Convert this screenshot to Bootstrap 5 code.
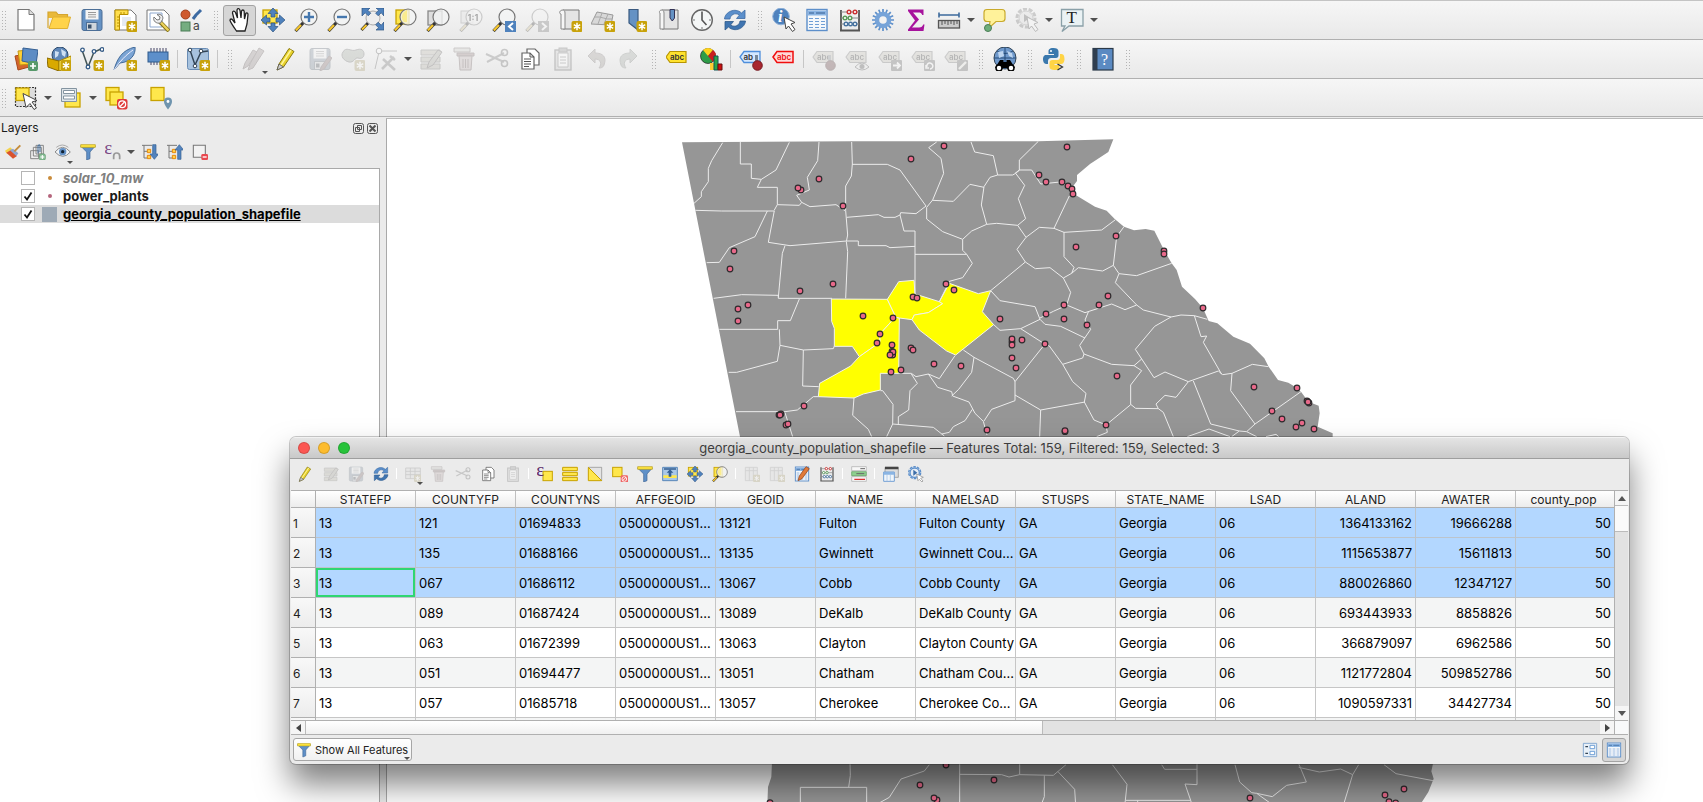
<!DOCTYPE html>
<html lang="en">
<head>
<meta charset="utf-8">
<meta name="viewport" content="width=device-width, initial-scale=1">
<title>Georgia county population</title>
<link href="https://cdn.jsdelivr.net/npm/bootstrap@5.3.0/dist/css/bootstrap.min.css" rel="stylesheet">
<style>
:root{--ui:#ebebeb;--line:#b0b0b0}
body{font-family:Inter,"Liberation Sans",sans-serif;font-size:13px;line-height:18px;color:#1a1a1a;background:var(--ui)}
svg{overflow:visible;display:block;flex:none}
.bar{background:linear-gradient(#f6f6f6,#e9e9e9);border-bottom:1px solid var(--line);height:39px}
.bar-first{border-top:1px solid #c4c4c4;height:40px}
.bar-last{height:38px}
.grip{width:16px;height:20px;flex:none;background:radial-gradient(circle,#b4b4b4 1px,transparent 1px) 0 0/3px 3px repeat content-box content-box;padding:0 5px 0 6px}
.grip-start{width:9px;padding:0 3px 0 1px}
.tool{border:1px solid transparent;background:none;padding:0;width:33px;height:31px;display:flex;align-items:center;justify-content:center;flex:none;border-radius:3px;position:relative}
.tool svg{width:24px;height:24px}
.tool.on{background:#d6d6d6;border-color:#a3a3a3}
.tool:disabled svg{opacity:.3;filter:grayscale(.7)}
.drop{border:0;background:none;padding:0;width:12px;height:24px;flex:none;display:flex;align-items:center;justify-content:center}
.drop::before,.corner::after{content:"";border:4px solid transparent;border-top:4px solid #505050;border-bottom:0}
.corner::after{position:absolute;right:1px;bottom:0;border-width:3px;border-top-width:3px}
.rule{width:1px;height:18px;margin:0 3px;background:#c6c6c6;flex:none}
.small-tools .tool{width:25px;height:25px}
.small-tools .tool svg{width:16px;height:16px}
.small-tools .rule{height:11px;background:#fff}
.side{width:386px;flex:none}
.side-title{height:21px;font-size:12px;padding:1px 8px 0 1px}
.side-tools{height:30px;padding-bottom:2px}
.mini{border:0;padding:0;background:none;width:11px;height:11px}
.tree{background:#fff;border-top:1px solid #a9a9a9;border-right:1px solid #a9a9a9;margin-right:6px}
.layer{height:18px;padding-left:21px;font-weight:700;font-size:13px}
.layer input{appearance:none;width:14px;height:14px;border:1px solid #b5b5b5;background:#fff;margin:0;flex:none}
.layer input:checked{background:#fff url("data:image/svg+xml,%3Csvg xmlns='http://www.w3.org/2000/svg' viewBox='0 0 12 12'%3E%3Cpath d='M2.500 6.500L5 9.500L9.500 2.500' fill='none' stroke='%23111' stroke-width='1.800'/%3E%3C/svg%3E")}
.sym{width:15px;height:15px;margin:0 6px 0 7px;display:flex;align-items:center;justify-content:center;flex:none}
.sym i{width:4px;height:4px;border-radius:50%}
.canvas{background:#fff;border-left:1px solid #a9a9a9;border-top:1px solid #b8b8b8;margin-top:1px;overflow:hidden}
.canvas svg{width:100%;height:100%}
.attr{position:absolute;left:290px;right:74px;top:437px;border-radius:6px;background:var(--ui);box-shadow:0 0 0 1px rgba(0,0,0,.2),0 20px 32px rgba(0,0,0,.5);overflow:hidden}
.attr-title{height:22px;background:linear-gradient(#e4e4e4,#c9c9c9);border-bottom:1px solid #9e9e9e;border-top:1px solid #f2f2f2;color:#3d3d3d;position:relative}
.attr-title h1{font-size:13px;line-height:20px;font-weight:400;margin:0}
.lights{position:absolute;left:8px;top:4px;gap:8px}
.lights button{width:12px;height:12px;border-radius:50%;border:1px solid rgba(0,0,0,.15);padding:0}
.attr-tools{height:31px;padding:0 0 2px 3px}
.gridbox{border-top:1px solid #b0b0b0;margin-left:1px;margin-right:1px}
.gridview{height:229px;overflow:hidden;background:#fff}
.attr-table{table-layout:fixed;width:1325px;border-collapse:separate;border-spacing:0;color:#000}
.attr-table th{font-weight:400;font-size:12px;height:17px;line-height:15px;padding:1px 0 0;text-align:center;background:linear-gradient(#fff,#ececec);border-right:1px solid #c0c0c0;border-bottom:1px solid #b0b0b0;color:#222}
.attr-table th:first-child{width:25px;border-color:#b0b0b0}
.attr-table th:last-child{padding-right:4px}
.attr-table tbody th{text-align:left;padding-left:2px;background:linear-gradient(#f8f8f8,#ececec)}
.attr-table td{height:30px;line-height:28px;padding:0 3px;white-space:nowrap;overflow:hidden;border-right:1px solid #c6c6c6;border-bottom:1px solid #c6c6c6;background:#fff}
.attr-table td:last-child{padding-right:4px}
.attr-table tr:nth-child(even) td{background:#f4f5f5}
.attr-table tr.picked td{background:#b3d7ff;border-color:#bcc4cc}
.attr-table tr.picked td.current{box-shadow:inset 0 0 0 2px #2fd672}
.sbar{background:#e2e2e2}
.sbar button{border:0;padding:0;width:14px;height:14px;background:#f5f5f5;display:flex;align-items:center;justify-content:center;flex:none}
.vbar{width:14px;border-left:1px solid #b0b0b0}
.vthumb{height:27px;background:#fafafa;border-top:1px solid #bbb;border-bottom:1px solid #bbb}
.hbar{height:15px;border-top:1px solid #b0b0b0;border-bottom:1px solid #b0b0b0}
.hbar button{height:13px}
.hthumb{width:57%;height:13px;background:linear-gradient(#fff,#f0f0f0);border-left:1px solid #bbb;border-right:1px solid #bbb}
.attr-foot{height:29px;padding:0 3px}
.filter-btn{height:23px;width:119px;font-size:11px;line-height:16px;white-space:nowrap;border:1px solid #a6a6a6;border-radius:3px;background:linear-gradient(#fff,#f1f1f1);padding:0 0 0 3px;position:relative;color:#222}
.filter-btn svg{width:14px;height:16px}
.foot-tools .tool{width:24px;height:24px}
.foot-tools .tool svg{width:16px;height:16px}
</style>
</head>
<body class="vh-100 overflow-hidden d-flex flex-column position-relative">

<svg width="0" height="0" class="position-absolute" aria-hidden="true">
<defs>
<symbol id="bd" viewBox="0 0 24 24"><rect x="13.500" y="13" width="11" height="11" rx="2" fill="#c8a20a"/><path d="M19 14.800v7.400M15.800 16.600l6.400 3.800M22.200 16.600l-6.400 3.800" stroke="#fff" stroke-width="1.500"/></symbol>
<symbol id="lens" viewBox="0 0 24 24"><path d="M9.500 14.500L1.500 23" stroke="#333" stroke-width="3.200"/><path d="M7 17L1.800 22.600" stroke="#f5c52c" stroke-width="2.200"/><circle cx="15" cy="9" r="8" fill="#f2f4f4" fill-opacity=".8" stroke="#777" stroke-width="1.200"/></symbol>
<symbol id="pencil" viewBox="0 0 24 24"><path d="M2 23l2-6L14 1.500l5 3L8.500 20z" fill="#e8d22c" stroke="#8a7a10"/><path d="M6 18L16 3" stroke="#fff59a" stroke-width="1.500"/><path d="M2 23l2-6 4.500 3z" fill="#ccc" stroke="#555" stroke-width=".8"/></symbol>
<symbol id="new" viewBox="0 0 24 24"><path d="M4 1.500h11l5 5V22H4z" fill="#fff" stroke="#777" stroke-width="1.200"/><path d="M15 1.500v5h5" fill="#ddd" stroke="#777"/></symbol>
<symbol id="open" viewBox="0 0 24 24"><path d="M1 4h8l2 2h10v4H1z" fill="#e9b93a"/><path d="M1 20V4h8l2 2.500h9.500V9" fill="none" stroke="#d5a52f" stroke-width="1.200"/><path d="M2 20.500L6 9h17.500l-3 11.500z" fill="#ffd34a" stroke="#e0b030"/></symbol>
<symbol id="save" viewBox="0 0 24 24"><rect x="2" y="1.500" width="20" height="21" rx="2" fill="#6592c4" stroke="#4c6f97"/><rect x="5.500" y="2" width="13" height="9.500" fill="#f5f5f5"/><path d="M8 4.500h8M8 6.700h8M8 9h8" stroke="#999"/><rect x="6.500" y="14.500" width="10.500" height="8" fill="#cfd6dc" stroke="#4c6f97"/><rect x="8" y="16.500" width="3.500" height="4" fill="#39506b"/></symbol>
<symbol id="layout" viewBox="0 0 24 24"><path d="M2 2h16l5 5v15H2z" fill="#fff" stroke="#777"/><path d="M2 2h13v4.500H6.500V22H2z" fill="#ffdf4d" stroke="#b89000"/><path d="M4 9h2M4 12h2M4 15h2M4 18h2M8 4v2M11 4v2" stroke="#b89000"/><path d="M9 9h9v9H9z" fill="#e6ebf2"/><use href="#bd"/></symbol>
<symbol id="manager" viewBox="0 0 24 24"><path d="M1 2h17l5 5v15H1z" fill="#fff" stroke="#777"/><path d="M4 5h12v14H4z" fill="none" stroke="#8da8cf"/><path d="M14 14l9 9" stroke="#80701a" stroke-width="4"/><path d="M14.500 14l8 8.500" stroke="#ecd25b" stroke-width="2.400"/><path d="M8 9l3 3 2.500-.500L14 9l-3-2.500c4-1 7 2 5.500 5l-2 3.500c-4 1-8-2-6.500-6z" fill="#eee" stroke="#777"/></symbol>
<symbol id="style" viewBox="0 0 24 24"><circle cx="6.500" cy="6.500" r="4.500" fill="#cf5a2e" stroke="#a0401c"/><path d="M14 11l3-4 5-5" stroke="#3d6aa2" stroke-width="3"/><rect x="2" y="14" width="9" height="9" fill="#74ad80" stroke="#4b7d56"/><text x="14" y="22" font-family="Inter" font-size="12" fill="#444">a</text></symbol>
<symbol id="hand" viewBox="0 0 24 24"><path d="M8.500 23C5 18 3 15 2 12.500c0-2 2-2 3 0l2 2.500L4.500 5c0-2.500 2-2.500 3-.500l2 5.500L9 2.500C9 0 11.500 0 12 2.500l1 7.500.500-6.500c0-2 2.500-2 2.700 0L16.500 11l1.200-5c.3-1.700 2.300-1.300 2.300.500l-1 9.500-2 7z" fill="#fff" stroke="#222" stroke-width="1.300"/></symbol>
<symbol id="arrows4" viewBox="0 0 24 24"><path d="M12 0l5 5.500h-3V9h-4V5.500H7zM12 24l5-5.500h-3V15h-4v3.500H7zM0 12l5.500-5v3H9v4H5.500v3zM24 12l-5.500-5v3H15v4h3.500v3z" fill="#4f82bd" stroke="#2f5580" stroke-width=".7"/></symbol>
<symbol id="pansel" viewBox="0 0 24 24"><rect x="2" y="2" width="14" height="13" fill="#ffe74c" stroke="#c8a200" stroke-width="1.300"/><use href="#arrows4"/></symbol>
<symbol id="zin" viewBox="0 0 24 24"><use href="#lens"/><path d="M15 4v10M10 9h10" stroke="#4577ae" stroke-width="2.400"/></symbol>
<symbol id="zout" viewBox="0 0 24 24"><use href="#lens"/><path d="M10 9h10" stroke="#4577ae" stroke-width="2.400"/></symbol>
<symbol id="zfull" viewBox="0 0 24 24"><path d="M8.500 14.500L1.500 22" stroke="#333" stroke-width="3"/><path d="M6.500 17L2 21.500" stroke="#f5c52c" stroke-width="2"/><circle cx="13" cy="10" r="7" fill="#eee" stroke="#aaa"/><path d="M2 0h8L7.800 2.200l3 3-2.600 2.600-3-3L2 8zM24 0v8l-2.800-3.200-3 3-2.600-2.600 3-3L16 0zM24 22h-8l2.600-2.200-3-3 2.600-2.600 3 3L24 14z" fill="#4f82bd" stroke="#2f5580" stroke-width=".7"/></symbol>
<symbol id="zsel" viewBox="0 0 24 24"><rect x="3" y="2" width="13" height="14" fill="#ffe74c" stroke="#c8a200" stroke-width="1.300"/><use href="#lens"/><path d="M11 4a7 7 0 0 0 0 10h3V2z" fill="#ffe74c" opacity=".5"/></symbol>
<symbol id="zlay" viewBox="0 0 24 24"><rect x="2" y="3" width="14" height="14" fill="#ddd" stroke="#888" stroke-width="1.300"/><use href="#lens"/></symbol>
<symbol id="znat" viewBox="0 0 24 24"><rect x="2" y="3" width="12" height="12" fill="#ddd" stroke="#888"/><use href="#lens"/><text x="8.500" y="13" font-family="Inter" font-weight="700" font-size="9">1:1</text></symbol>
<symbol id="zlast" viewBox="0 0 24 24"><use href="#lens"/><rect x="13" y="13" width="11" height="11" fill="#4f82bd"/><path d="M21 15l-4 3.500 4 3.500" fill="none" stroke="#fff" stroke-width="2"/></symbol>
<symbol id="znext" viewBox="0 0 24 24"><use href="#lens"/><rect x="13" y="13" width="11" height="11" fill="#777"/><path d="M17 15l4 3.500-4 3.500" fill="none" stroke="#fff" stroke-width="2"/></symbol>
<symbol id="mapview" viewBox="0 0 24 24"><path d="M5 2h16v19H5z" fill="#e4e4e4" stroke="#777"/><path d="M5 2C1 2 1 6 3 6v15h4V5c0-2-1-3-2-3z" fill="#f6f6f6" stroke="#888"/><use href="#bd"/></symbol>
<symbol id="map3d" viewBox="0 0 24 24"><path d="M6 4l16 3-2 10L0 16z" fill="#d8d8d8" stroke="#999"/><path d="M4 9c7-1 10 3 17 2M11 5L7 16M17 6l-4 10" fill="none" stroke="#aaa"/><use href="#bd"/></symbol>
<symbol id="bookm" viewBox="0 0 24 24"><path d="M5 1.500h9V22L5 15z" fill="#6592c4" stroke="#3a5a80" stroke-width="1.200"/><use href="#bd" x="-1"/></symbol>
<symbol id="bookms" viewBox="0 0 24 24"><path d="M5 2h16v19H5z" fill="#e4e4e4" stroke="#777"/><path d="M5 2C2 2 2 5 3 5v16h4V5c0-2-1-3-2-3z" fill="#f6f6f6" stroke="#888"/><path d="M13 1.500h4.500V10l-2.200 3L13 10z" fill="#6592c4" stroke="#335"/></symbol>
<symbol id="clock" viewBox="0 0 24 24"><circle cx="12" cy="12" r="10.300" fill="#f4f6f6" stroke="#666" stroke-width="1.400"/><path d="M12 3.500V12l4.500 5" fill="none" stroke="#555" stroke-width="1.600"/><path d="M19 12h2M3 12h2M12 19v2" stroke="#777"/></symbol>
<symbol id="refresh" viewBox="0 0 24 24"><path d="M1.500 11C2 4 12-1 18.500 5L22 2v8.500h-8.500L16.500 7c-5-3-9 0-9.500 4z" fill="#5b8fcb" stroke="#3c6ba3" stroke-width=".8"/><path d="M22.500 13C22 20 12 25 5.500 19L2 22v-8.500h8.500L7.500 17c5 3 9 0 9.500-4z" fill="#3f74b0" stroke="#2f5a8c" stroke-width=".8"/></symbol>
<symbol id="cursor" viewBox="0 0 24 24"><path d="M12 9l11 5.500-4 1.500 4 5.500-2.500 2-4-5.500-2.500 3z" fill="#fff" stroke="#444"/></symbol>
<symbol id="info" viewBox="0 0 24 24"><circle cx="9" cy="8.500" r="8.300" fill="#4f82bd" stroke="#8eb0d8"/><text x="6" y="14" font-family="Liberation Serif" font-style="italic" font-weight="700" font-size="16" fill="#fff">i</text><use href="#cursor"/></symbol>
<symbol id="table" viewBox="0 0 24 24"><rect x="2" y="1.500" width="20" height="21" fill="#f5f8fb" stroke="#5d8fca" stroke-width="1.400"/><rect x="3" y="2.500" width="18" height="5" fill="#8ab4e3"/><path d="M4 5h5M11 5h9" stroke="#345f92"/><path d="M4 10.500h4M10 10.500h4M16 10.500h4M4 13.500h4M10 13.500h4M16 13.500h4M4 16.500h4M10 16.500h4M16 16.500h4M4 19.500h4M10 19.500h4M16 19.500h4" stroke="#6f9fd6"/></symbol>
<symbol id="abacus" viewBox="0 0 24 24"><path d="M3 22V2M21 22V2M2 22.500h20" stroke="#555" stroke-width="1.800"/><path d="M3 4h18M3 10h18M3 16h18" stroke="#888"/><g fill="#fff" stroke-width="1.400"><g stroke="#c33"><circle cx="11" cy="4" r="1.800"/><circle cx="17" cy="4" r="1.800"/></g><g stroke="#5a9a5a"><circle cx="7" cy="10" r="1.800"/><circle cx="12" cy="10" r="1.800"/></g><g stroke="#48739f"><circle cx="8" cy="16" r="1.800"/><circle cx="12.500" cy="16" r="1.800"/><circle cx="17" cy="16" r="1.800"/></g></g></symbol>
<symbol id="gear" viewBox="0 0 24 24"><path d="M12 1v22M1 12h22M4.200 4.200l15.600 15.600M19.800 4.200L4.200 19.800M7.800 1.800l8.400 20.400M16.200 1.800L7.800 22.200M1.800 7.800l20.400 8.400M1.800 16.200l20.400-8.400" stroke="#5d8fca" stroke-width="1.700"/><circle cx="12" cy="12" r="6" fill="#f2f2f2" stroke="#76a3d8" stroke-width="4.500"/></symbol>
<symbol id="sigma" viewBox="0 0 24 24"><path d="M4 1.500h15.500V7h-1.300c-.7-2-1.700-2.500-4-2.500H9l6 7-7 8h7c2.500 0 3.500-1 4.200-3h1.300L19.500 23H4v-1.500l7-9L4 3z" fill="#a6129c"/></symbol>
<symbol id="ruler" viewBox="0 0 24 24"><path d="M2 7h20M2 4.500v5M22 4.500v5" stroke="#3c6a9c" stroke-width="1.600"/><rect x="1.500" y="12.500" width="21" height="7.500" fill="#ccc" stroke="#555" stroke-width="1.300"/><path d="M5 13v4M8 13v3M11 13v4M14 13v3M17 13v4M20 13v3" stroke="#555"/></symbol>
<symbol id="tip" viewBox="0 0 24 24"><path d="M5 1.500h15q3 0 3 3v6q0 3-3 3h-6L7 20l1-6.500H5q-3 0-3-3v-6q0-3 3-3z" fill="#fff29a" stroke="#c9aa2c" stroke-width="1.200"/><circle cx="6" cy="20" r="3.500" fill="#6fae7b" stroke="#4b7d56"/></symbol>
<symbol id="action" viewBox="0 0 24 24"><circle cx="11" cy="10" r="9" fill="none" stroke="#777" stroke-width="3" stroke-dasharray="4 1.600"/><circle cx="11" cy="10" r="7" fill="#ddd" stroke="#888"/><path d="M9 6l6 4-6 4z" fill="#555"/><use href="#cursor"/></symbol>
<symbol id="tnote" viewBox="0 0 24 24"><path d="M1.500 1.500H23V18H9l-7 5.500L5 18H1.500z" fill="#eaf2f4" stroke="#8aa0a8" stroke-width="1.300"/><text x="6.500" y="15" font-family="Liberation Serif" font-size="17" fill="#222">T</text></symbol>
<symbol id="addlayers" viewBox="0 0 24 24"><path d="M1 9l10-2 4 13-11 3z" fill="#d3652c" stroke="#a8481a"/><path d="M4 4l11-1 2 14-11 1z" fill="#ffcf33" stroke="#c39812"/><path d="M9 1l15 2-2 14-14-3z" fill="#5d8cc4" stroke="#355f92"/><rect x="14" y="14" width="10" height="10" rx="2" fill="#57996a"/><path d="M19 16v6M16 19h6" stroke="#fff" stroke-width="1.700"/></symbol>
<symbol id="gpkg" viewBox="0 0 24 24"><circle cx="13" cy="8" r="8" fill="#5f87b8" stroke="#2d4a6c"/><path d="M8 4l4 1-1 4-3 2zM14 2l5 3-1 5-3-2z" fill="#cfe0f2"/><path d="M0 11l12 3v10L1 20z" fill="#d9a900" stroke="#8a6a00"/><path d="M12 14l12-5v10l-12 5z" fill="#ffea5c" stroke="#a88200"/><use href="#bd"/></symbol>
<symbol id="vec" viewBox="0 0 24 24"><path d="M2 3l6 17L14 5l7-3" fill="none" stroke="#455" stroke-width="1.500"/><g fill="#fff" stroke="#355b86" stroke-width="1.300"><circle cx="2.500" cy="3" r="1.800"/><circle cx="8" cy="20" r="1.800"/><circle cx="14" cy="4.500" r="1.800"/><circle cx="22" cy="2.500" r="1.800"/></g></symbol>
<symbol id="newvec" viewBox="0 0 24 24"><use href="#vec"/><use href="#bd"/></symbol>
<symbol id="feather" viewBox="0 0 24 24"><path d="M1 23C4 12 9 3 22 0c1 7-4 15-15 16z" fill="#7ba4d4" stroke="#3f6898"/><path d="M1 23C7 14 13 8 20 3" fill="none" stroke="#eef"/><use href="#bd"/></symbol>
<symbol id="chip" viewBox="0 0 24 24"><path d="M5 1v17M8 1v17M11 1v17M14 1v17M17 1v17M20 1v17" stroke="#446"/><rect x="2" y="5" width="20" height="10" fill="#5d8fca" stroke="#2f5a8c"/><use href="#bd"/></symbol>
<symbol id="vlayer" viewBox="0 0 24 24"><rect x="1.500" y="1.500" width="21" height="21" rx="2" fill="#a7c2de" stroke="#6a8db5"/><path d="M4 3l5 15L15 5l7-1" fill="none" stroke="#345" stroke-width="1.400"/><circle cx="9" cy="19" r="1.800" fill="#fff" stroke="#345"/><circle cx="4" cy="3" r="1.800" fill="#fff" stroke="#345"/><circle cx="15" cy="4" r="1.800" fill="#fff" stroke="#345"/><use href="#bd"/></symbol>
<symbol id="pencils" viewBox="0 0 24 24"><g fill="#a88" stroke="#755"><path d="M1 22l2-6L11 3l4 2L6 19z"/><path d="M6 23l2-6L17 1l5 3-11 17z"/></g></symbol>
<symbol id="saveedit" viewBox="0 0 24 24"><use href="#save"/><path d="M12 24l1-4 8-11 3 2-8 11z" fill="#a66" stroke="#855"/></symbol>
<symbol id="addpoly" viewBox="0 0 24 24"><path d="M2 5c3-6 8 0 13-2s8 0 8 4-3 5-6 4-4 5-9 4S-1 9 2 5z" fill="#9ab08f" stroke="#666"/><use href="#bd"/></symbol>
<symbol id="vertex" viewBox="0 0 24 24"><path d="M5 5L1 22M5 4h18" stroke="#666"/><circle cx="5" cy="4" r="2.800" fill="#fff" stroke="#555"/><path d="M8 22L20 10M9 12l12 11M16 9l5 4" stroke="#777" stroke-width="2.600"/></symbol>
<symbol id="multiedit" viewBox="0 0 24 24"><path d="M2 3h19v5H2zM2 10h19v5H2zM2 17h19v5H2z" fill="#bdb68e" stroke="#776"/><path d="M8 21l2-6L19 3l4 2-9 13z" fill="#aa8" stroke="#655"/></symbol>
<symbol id="trash" viewBox="0 0 24 24"><path d="M2 1h16v4H2z" fill="#ccb" stroke="#866"/><path d="M5 6h17v3H5z" fill="#b77" stroke="#855"/><path d="M7 9h13l-1 14H8z" fill="#daa" stroke="#855"/><path d="M11 12v9M13.500 12v9M16 12v9" stroke="#855"/></symbol>
<symbol id="cut" viewBox="0 0 24 24"><path d="M1 7l18 8M2 15l17-9" stroke="#777" stroke-width="2"/><circle cx="19.500" cy="5.500" r="3" fill="none" stroke="#666" stroke-width="1.600"/><circle cx="19.500" cy="16.500" r="3" fill="none" stroke="#666" stroke-width="1.600"/></symbol>
<symbol id="copy" viewBox="0 0 24 24"><g fill="#fff" stroke="#666" stroke-width="1.200"><path d="M9 2h8l4 4v12H9z"/><path d="M4 6h8l4 4v12H4z"/></g><path d="M6 12h7M6 14.500h7M6 17h7M6 19.500h5M12 6v4h4" fill="none" stroke="#555"/></symbol>
<symbol id="paste" viewBox="0 0 24 24"><rect x="4" y="3" width="16" height="20" fill="#ccc" stroke="#666" stroke-width="1.400"/><rect x="8" y="1" width="8" height="4" fill="#999" stroke="#666"/><path d="M7 6h10v14H7z" fill="#fff" stroke="#777"/><path d="M9 10h6M9 13h6M9 16h6" stroke="#777"/></symbol>
<symbol id="undo" viewBox="0 0 24 24"><path d="M4 9l7-7v4c8 0 12 4 9 12-1 3-4 3-5 3 3-4 2-9-4-9v4z" fill="#a98" stroke="#877"/></symbol>
<symbol id="redo" viewBox="0 0 24 24"><path d="M20 9l-7-7v4c-8 0-12 4-9 12 1 3 4 3 5 3-3-4-2-9 4-9v4z" fill="#9a9" stroke="#787"/></symbol>
<symbol id="tagshape" viewBox="0 0 24 24"><path d="M1 10l4-5.500h16v11H5z"/></symbol>
<symbol id="tag" viewBox="0 0 24 24"><use href="#tagshape" x="-1" fill="#ffe22e" stroke="#b89500" stroke-width="1.200"/><text x="4" y="13" font-family="Inter" font-weight="600" font-size="8" fill="#333">abc</text></symbol>
<symbol id="diagram" viewBox="0 0 24 24"><circle cx="9" cy="9" r="7.500" fill="#2e9c48" stroke="#222" stroke-width=".7"/><path d="M9 9L4 3a7.500 7.500 0 0 1 10 0z" fill="#ffd21c"/><path d="M9 9l5-6a7.500 7.500 0 0 1 0 12z" fill="#c81e1e"/><path d="M11 16h4v7h-4z" fill="#fc3"/><path d="M15 9h4v14h-4z" fill="#2aa54a" stroke="#155"/><path d="M19 17h4v6h-4z" fill="#c11" stroke="#611"/></symbol>
<symbol id="pin" viewBox="0 0 24 24"><path d="M17.500 8v10" stroke="#789" stroke-width="3"/><circle cx="18.500" cy="18.500" r="4.800" fill="#a82730" stroke="#761a22"/></symbol>
<symbol id="tagpin" viewBox="0 0 24 24"><use href="#tagshape" fill="#d4e8ff" stroke="#4f8fdc" stroke-width="1.300"/><text x="4.500" y="13" font-family="Inter" font-weight="600" font-size="8" fill="#333">ab</text><use href="#pin"/></symbol>
<symbol id="tagred" viewBox="0 0 24 24"><use href="#tagshape" fill="#ffd9d9" stroke="#f00d0d" stroke-width="1.500"/><text x="5" y="13" font-family="Inter" font-weight="600" font-size="8" fill="#e11">abc</text></symbol>
<symbol id="taggrey" viewBox="0 0 24 24"><use href="#tagshape" fill="#c9c4a3" stroke="#777" stroke-width="1.200"/><text x="5" y="13" font-family="Inter" font-weight="600" font-size="8" fill="#333">abc</text></symbol>
<symbol id="t1" viewBox="0 0 24 24"><use href="#taggrey"/><use href="#pin"/></symbol>
<symbol id="t2" viewBox="0 0 24 24"><use href="#taggrey"/><path d="M10 20q7-8 14 0-7 6-14 0z" fill="#eee" stroke="#555"/><circle cx="17" cy="19.500" r="2.500" fill="#555"/></symbol>
<symbol id="t3" viewBox="0 0 24 24"><use href="#taggrey"/><rect x="13" y="13" width="11" height="11" rx="1" fill="#666"/><path d="M15 18.500h7M19 15.500l3 3-3 3" fill="none" stroke="#fff" stroke-width="1.800"/></symbol>
<symbol id="t4" viewBox="0 0 24 24"><use href="#taggrey"/><rect x="13" y="13" width="11" height="11" rx="1" fill="#666"/><path d="M16 20a3 3 0 1 1 3 2M15 18v3h3" fill="none" stroke="#fff" stroke-width="1.500"/></symbol>
<symbol id="t5" viewBox="0 0 24 24"><use href="#taggrey"/><rect x="13" y="13" width="11" height="11" rx="1" fill="#666"/><path d="M15 22l7-7" stroke="#eed" stroke-width="2.400"/></symbol>
<symbol id="metas" viewBox="0 0 24 24"><circle cx="12" cy="11" r="11" fill="#6f99cc" stroke="#345"/><path d="M1 11h22M12 0v22M4 4q8 5 16 0" fill="none" stroke="#244b78"/><path d="M5 5l5-1 1 5-5 2zM14 4l5 2 1 5-4-2z" fill="#bdd5f0"/><path d="M7 13h3.500v2h3v-2H17l5 8H2z" fill="#000"/><circle cx="6" cy="21" r="3" fill="#fff" stroke="#000" stroke-width="1.500"/><circle cx="18" cy="21" r="3" fill="#fff" stroke="#000" stroke-width="1.500"/></symbol>
<symbol id="python" viewBox="0 0 24 24"><path d="M11.500 1C7 1 6.500 3 6.500 4.500V7H12v1H4C1.500 8 1 10.500 1 12.500S2 17 4 17h2v-3c0-2 1.500-3 3-3h5c1.500 0 2.500-1 2.500-2.500v-4C16.500 2 14.500 1 11.500 1z" fill="#3a78ad"/><circle cx="9" cy="4" r="1" fill="#fff"/><path d="M18 7h1.500c2.500 0 3 3 3 5s-1 5-3 5h-7v1h5v2.500c0 2-2 2.500-5 2.500s-5-1-5-3v-4c0-2 1-3 3-3h5c1.500 0 2.500-1 2.500-3z" fill="#ffd445"/><path d="M15.500 17l5 3-5 3" fill="none" stroke="#333" stroke-width="1.300"/></symbol>
<symbol id="help" viewBox="0 0 24 24"><rect x="2" y="1.500" width="20" height="21.500" fill="#5b8ac2" stroke="#2b3948" stroke-width="1.200"/><path d="M2 1.500h4.500V23H2z" fill="#2f3e50"/><text x="10" y="18" font-family="Liberation Serif" font-size="16" fill="#fff">?</text></symbol>
<symbol id="select" viewBox="0 0 24 24"><rect x="1.500" y="1.500" width="20" height="19" fill="#ddd" stroke="#333" stroke-width="1.200" stroke-dasharray="2 1.300"/><rect x="2" y="2" width="13" height="12.500" fill="#ffe74c" stroke="#c8a200" stroke-width="1.300"/><path d="M9 7.500l14 7-5 1.500 4.500 6-2.500 1.500-4-6-4 4z" fill="#fff" stroke="#444"/></symbol>
<symbol id="selform" viewBox="0 0 24 24"><rect x="6" y="7" width="15" height="14" fill="#ffe74c" stroke="#c8a200" stroke-width="1.300"/><path d="M2.500 2.500h15v13h-15z" fill="#dfe6ea" stroke="#8494a0"/><path d="M4.500 4.500h11v3h-11zM4.500 10h11v3h-11z" fill="#fff" stroke="#8494a0"/></symbol>
<symbol id="desel" viewBox="0 0 24 24"><rect x="2" y="1.500" width="13" height="13" fill="#ffe74c" stroke="#c8a200" stroke-width="1.300"/><rect x="6" y="6" width="13" height="13" fill="#ffe74c" stroke="#c8a200" stroke-width="1.300"/><rect x="13" y="13" width="10.500" height="10.500" rx="2" fill="#df3a3a"/><circle cx="18.200" cy="18.200" r="3.400" fill="none" stroke="#fff" stroke-width="1.300"/><path d="M16 20.500l4.500-4.500" stroke="#fff" stroke-width="1.300"/></symbol>
<symbol id="selloc" viewBox="0 0 24 24"><rect x="2" y="1.500" width="13" height="13" fill="#ffe74c" stroke="#c8a200" stroke-width="1.300"/><path d="M19 23.500q-4-5-4-8a4 4 0 0 1 8 0q0 3-4 8z" fill="#6f94ae"/><circle cx="19" cy="15.500" r="1.400" fill="#fff"/></symbol>
<symbol id="brush" viewBox="0 0 24 24"><path d="M0 10l8-5 5 5-4 6-7-2z" fill="#f4d34c"/><path d="M2 13l10 9 6-4-9-9z" fill="#d9532d"/><path d="M7 9l10 9 3-4-8-7z" fill="#8fa6d0"/><path d="M14 11l9-9" stroke="#c58c3a" stroke-width="3"/></symbol>
<symbol id="addgroup" viewBox="0 0 24 24"><path d="M1 10h12v12H1zM5 5h12v13H5zM9 2h11v13H9z" fill="#eee" stroke="#777" stroke-width="1.300"/><path d="M12 14V3q2-4 3 0v9" fill="none" stroke="#446f9c" stroke-width="1.600"/><rect x="14" y="15" width="9" height="9" rx="2" fill="#8cc09a" stroke="#5a9a6a"/><path d="M18.500 16.500v6M15.500 19.500h6" stroke="#fff" stroke-width="1.600"/></symbol>
<symbol id="eye" viewBox="0 0 24 24"><path d="M0 12q11-14 23 0-11 13-23 0z" fill="#f2f4f6" stroke="#8a8a8a" stroke-width="1.500"/><circle cx="11.500" cy="11.500" r="5.500" fill="#6593c8"/><circle cx="11.500" cy="11.500" r="2.500" fill="#123"/><path d="M2 5q9-7 18 0" fill="none" stroke="#aaa" stroke-width="1.500"/></symbol>
<symbol id="funnel" viewBox="0 0 24 24"><path d="M1 3h22l-8 9v10l-5 2V12z" fill="#5f90c8" stroke="#3d6494"/><path d="M1 1h22v4H1z" fill="#ffe640" stroke="#b79c15"/></symbol>
<symbol id="expr" viewBox="0 0 24 24"><text x="-1" y="15" font-family="Liberation Serif" font-size="28" fill="#7b4a86">ε</text><path d="M13 23v-5a4.500 4.500 0 0 1 9 0v5" fill="none" stroke="#999" stroke-width="2.600"/></symbol>
<symbol id="tree" viewBox="0 0 24 24"><path d="M0 2h15M3 2v19h7M3 11h8" fill="none" stroke="#777" stroke-width="1.500"/><path d="M8 8h5v5H8zM8 17h5v5H8z" fill="#ffd24a" stroke="#e8890c" stroke-width="1.500"/></symbol>
<symbol id="expand" viewBox="0 0 24 24"><use href="#tree"/><path d="M16 1h5v14h4l-6.500 8L12 15h4z" fill="#5383bd" stroke="#345f92"/></symbol>
<symbol id="collapse" viewBox="0 0 24 24"><use href="#tree"/><path d="M16 23h5V9h4l-6.500-8L12 9h4z" fill="#5383bd" stroke="#345f92"/></symbol>
<symbol id="rmlayer" viewBox="0 0 24 24"><path d="M2 2h18v18H2z" fill="#f2f2f2" stroke="#777" stroke-width="1.600"/><rect x="14" y="15" width="10" height="9" rx="2" fill="#e8484f"/><path d="M16 19.500h6" stroke="#fff" stroke-width="2"/></symbol>
<symbol id="addrow" viewBox="0 0 24 24"><path d="M1 3h22v16H1zM1 8h22M1 13h22M8 3v16M15 3v16" fill="#ddd" stroke="#888" stroke-width="1.300"/><use href="#bd"/></symbol>
<symbol id="selexpr" viewBox="0 0 24 24"><rect x="9" y="8" width="14" height="14" fill="#ffe74c" stroke="#c8a200" stroke-width="1.500"/><text x="-1" y="15" font-family="Liberation Serif" font-size="28" fill="#5d2a6c">ε</text></symbol>
<symbol id="selall" viewBox="0 0 24 24"><path d="M1 2h22v5H1zM1 9.500h22v5H1zM1 17h22v5H1z" fill="#ffe74c" stroke="#c8a200" stroke-width="1.500"/></symbol>
<symbol id="invert" viewBox="0 0 24 24"><path d="M2 2h20v20z" fill="#e4e4e4" stroke="#888"/><path d="M2 2v20h20z" fill="#ffe74c" stroke="#c8a200" stroke-width="1.500"/></symbol>
<symbol id="desel1" viewBox="0 0 24 24"><rect x="1" y="2" width="14" height="14" fill="#ffe74c" stroke="#c8a200" stroke-width="1.500"/><rect x="13" y="14" width="11" height="11" rx="2" fill="#e66"/><circle cx="18.500" cy="19.500" r="3.500" fill="none" stroke="#fff" stroke-width="1.300"/><path d="M16 22l5-5" stroke="#fff" stroke-width="1.500"/></symbol>
<symbol id="totop" viewBox="0 0 24 24"><path d="M1 2h22v20H1z" fill="#a9c8e8" stroke="#5a87b8" stroke-width="1.500"/><path d="M2 14h20v4H2z" fill="#ffe74c"/><path d="M3 4.500h18" stroke="#345f92" stroke-width="2"/><path d="M12 5l5 5h-3v6h-4v-6H7z" fill="#345f92"/></symbol>
<symbol id="addcol" viewBox="0 0 24 24"><path d="M2 2h18v20H2zM2 7h18M8 2v20M14 2v20" fill="#ddd" stroke="#999" stroke-width="1.300"/><use href="#bd"/></symbol>
<symbol id="editcol" viewBox="0 0 24 24"><use href="#table"/><path d="M6 22l2-7L18 1l5 3-11 15z" fill="#e07a3a" stroke="#8d3c14"/></symbol>
<symbol id="condfmt" viewBox="0 0 24 24"><path d="M1 1h22v6H1zM1 16h22v7H1z" fill="#f7f7f7" stroke="#aaa"/><path d="M1 8.500h22v6H1z" fill="#8fd08f" stroke="#5a9a5a"/><path d="M5 20h16" stroke="#d33" stroke-width="2"/><path d="M14 4h7M8 11.500h12" stroke="#666" stroke-width="1.500"/></symbol>
<symbol id="dock" viewBox="0 0 24 24"><path d="M3 2h20v15H3z" fill="#ddd" stroke="#888"/><path d="M3 1h20v4H3z" fill="#444"/><path d="M1 9h16v14H1z" fill="#f0f5fa" stroke="#6b9bd2" stroke-width="1.400"/><path d="M1 9h16v4H1z" fill="#8ab4e3"/><path d="M6 13v10M11 13v10" stroke="#9bbce2"/></symbol>
<symbol id="actions" viewBox="0 0 24 24"><circle cx="10" cy="10" r="9" fill="#dce8f5" stroke="#5d8fca" stroke-width="2" stroke-dasharray="4 1.600"/><circle cx="10" cy="10" r="7" fill="#e8eef5" stroke="#5d8fca" stroke-width="2"/><path d="M8 5.500l6 4.500-6 4.500z" fill="#3d6ea8"/><path d="M13 12l10 5-4 1.500 3.500 4-1.500 1.500-4-4-2 2z" fill="#fff" stroke="#888"/></symbol>
<symbol id="form" viewBox="0 0 24 24"><path d="M2 2h20v20H2z" fill="#e8f0f8" stroke="#86a9d0" stroke-width="1.500"/><path d="M5 7h4M5 17h4" stroke="#345" stroke-width="2"/><path d="M12 5h7v5h-7zM12 14h7v5h-7z" fill="#fff" stroke="#6f9fd6" stroke-width="1.500"/></symbol>
</defs>
</svg>

<header>
<div class="bar bar-first d-flex align-items-center" role="toolbar" aria-label="Project and navigation">
<span class="grip grip-start"></span>
<button class="tool" aria-label="New project"><svg><use href="#new"/></svg></button>
<button class="tool" aria-label="Open"><svg><use href="#open"/></svg></button>
<button class="tool" aria-label="Save"><svg><use href="#save"/></svg></button>
<button class="tool" aria-label="New layout"><svg><use href="#layout"/></svg></button>
<button class="tool" aria-label="Layout manager"><svg><use href="#manager"/></svg></button>
<button class="tool" aria-label="Style manager"><svg><use href="#style"/></svg></button>
<span class="grip"></span>
<button class="tool on" aria-label="Pan"><svg><use href="#hand"/></svg></button>
<button class="tool" aria-label="Pan to selection"><svg><use href="#pansel"/></svg></button>
<button class="tool" aria-label="Zoom in"><svg><use href="#zin"/></svg></button>
<button class="tool" aria-label="Zoom out"><svg><use href="#zout"/></svg></button>
<button class="tool" aria-label="Zoom full"><svg><use href="#zfull"/></svg></button>
<button class="tool" aria-label="Zoom to selection"><svg><use href="#zsel"/></svg></button>
<button class="tool" aria-label="Zoom to layer"><svg><use href="#zlay"/></svg></button>
<button class="tool" disabled aria-label="Native zoom"><svg><use href="#znat"/></svg></button>
<button class="tool" aria-label="Zoom last"><svg><use href="#zlast"/></svg></button>
<button class="tool" disabled aria-label="Zoom next"><svg><use href="#znext"/></svg></button>
<button class="tool" aria-label="New map view"><svg><use href="#mapview"/></svg></button>
<button class="tool" aria-label="New 3D view"><svg><use href="#map3d"/></svg></button>
<button class="tool" aria-label="New bookmark"><svg><use href="#bookm"/></svg></button>
<button class="tool" aria-label="Bookmarks"><svg><use href="#bookms"/></svg></button>
<button class="tool" aria-label="Temporal controller"><svg><use href="#clock"/></svg></button>
<button class="tool" aria-label="Refresh"><svg><use href="#refresh"/></svg></button>
<span class="grip"></span>
<button class="tool" aria-label="Identify"><svg><use href="#info"/></svg></button>
<button class="tool" aria-label="Attribute table"><svg><use href="#table"/></svg></button>
<button class="tool" aria-label="Field calculator"><svg><use href="#abacus"/></svg></button>
<button class="tool" aria-label="Processing toolbox"><svg><use href="#gear"/></svg></button>
<button class="tool" aria-label="Statistics"><svg><use href="#sigma"/></svg></button>
<button class="tool" aria-label="Measure"><svg><use href="#ruler"/></svg></button>
<button class="drop" aria-label="Measure options"></button>
<button class="tool" aria-label="Map tips"><svg><use href="#tip"/></svg></button>
<button class="tool" disabled aria-label="Run action"><svg><use href="#action"/></svg></button>
<button class="drop" aria-label="Action options"></button>
<button class="tool" aria-label="Text annotation"><svg><use href="#tnote"/></svg></button>
<button class="drop" aria-label="Annotation options"></button>
</div>

<div class="bar d-flex align-items-center" role="toolbar" aria-label="Layers and editing">
<span class="grip grip-start"></span>
<button class="tool" aria-label="Data source manager"><svg><use href="#addlayers"/></svg></button>
<button class="tool" aria-label="New GeoPackage"><svg><use href="#gpkg"/></svg></button>
<button class="tool" aria-label="New shapefile"><svg><use href="#newvec"/></svg></button>
<button class="tool" aria-label="New SpatiaLite"><svg><use href="#feather"/></svg></button>
<button class="tool" aria-label="New scratch layer"><svg><use href="#chip"/></svg></button>
<span class="rule"></span>
<button class="tool" aria-label="New virtual layer"><svg><use href="#vlayer"/></svg></button>
<span class="rule"></span>
<span class="grip"></span>
<button class="tool corner" disabled aria-label="Current edits"><svg><use href="#pencils"/></svg></button>
<button class="tool" aria-label="Toggle editing"><svg><use href="#pencil"/></svg></button>
<button class="tool" disabled aria-label="Save edits"><svg><use href="#saveedit"/></svg></button>
<button class="tool" disabled aria-label="Add polygon"><svg><use href="#addpoly"/></svg></button>
<button class="tool" disabled aria-label="Vertex tool"><svg><use href="#vertex"/></svg></button>
<button class="drop" aria-label="Vertex options"></button>
<button class="tool" disabled aria-label="Modify attributes"><svg><use href="#multiedit"/></svg></button>
<button class="tool" disabled aria-label="Delete"><svg><use href="#trash"/></svg></button>
<button class="tool" disabled aria-label="Cut"><svg><use href="#cut"/></svg></button>
<button class="tool" aria-label="Copy"><svg><use href="#copy"/></svg></button>
<button class="tool" disabled aria-label="Paste"><svg><use href="#paste"/></svg></button>
<button class="tool" disabled aria-label="Undo"><svg><use href="#undo"/></svg></button>
<button class="tool" disabled aria-label="Redo"><svg><use href="#redo"/></svg></button>
<span class="grip"></span>
<button class="tool" aria-label="Labeling"><svg><use href="#tag"/></svg></button>
<button class="tool" aria-label="Diagrams"><svg><use href="#diagram"/></svg></button>
<span class="rule"></span>
<button class="tool" aria-label="Pinned labels"><svg><use href="#tagpin"/></svg></button>
<button class="tool" aria-label="Unplaced labels"><svg><use href="#tagred"/></svg></button>
<span class="rule"></span>
<button class="tool" disabled aria-label="Pin labels"><svg><use href="#t1"/></svg></button>
<button class="tool" disabled aria-label="Show labels"><svg><use href="#t2"/></svg></button>
<button class="tool" disabled aria-label="Move label"><svg><use href="#t3"/></svg></button>
<button class="tool" disabled aria-label="Rotate label"><svg><use href="#t4"/></svg></button>
<button class="tool" disabled aria-label="Edit label"><svg><use href="#t5"/></svg></button>
<span class="grip"></span>
<button class="tool" aria-label="MetaSearch"><svg><use href="#metas"/></svg></button>
<span class="grip"></span>
<button class="tool" aria-label="Python console"><svg><use href="#python"/></svg></button>
<span class="grip"></span>
<button class="tool" aria-label="Help"><svg><use href="#help"/></svg></button>
<span class="grip"></span>
</div>

<div class="bar bar-last d-flex align-items-center" role="toolbar" aria-label="Selection">
<span class="grip grip-start"></span>
<button class="tool" aria-label="Select features"><svg><use href="#select"/></svg></button>
<button class="drop" aria-label="Select options"></button>
<button class="tool" aria-label="Select by value"><svg><use href="#selform"/></svg></button>
<button class="drop" aria-label="Value options"></button>
<button class="tool" aria-label="Deselect"><svg><use href="#desel"/></svg></button>
<button class="drop" aria-label="Deselect options"></button>
<button class="tool" aria-label="Select by location"><svg><use href="#selloc"/></svg></button>
</div>
</header>

<main class="d-flex flex-fill">
<aside class="side d-flex flex-column">
<div class="side-title d-flex align-items-center">
<span class="flex-fill">Layers</span>
<span class="d-flex" style="gap:3px">
<button class="mini" aria-label="Float panel"><svg viewBox="0 0 11 11" width="11" height="11" fill="none" stroke="#555"><rect x=".5" y=".5" width="10" height="10" rx="2"/><path d="M4.500 2.500h4v4h-4zM2.500 4.500h4v4h-4z"/></svg></button>
<button class="mini" aria-label="Close panel"><svg viewBox="0 0 11 11" width="11" height="11" fill="none" stroke="#555"><rect x=".5" y=".5" width="10" height="10" rx="2"/><path d="M2.500 2.500l6 6M8.500 2.500l-6 6" stroke-width="2"/></svg></button>
</span>
</div>
<div class="side-tools small-tools d-flex align-items-center" role="toolbar" aria-label="Layer tools">
<button class="tool" aria-label="Styling panel"><svg><use href="#brush"/></svg></button>
<button class="tool" aria-label="Add group"><svg><use href="#addgroup"/></svg></button>
<button class="tool corner" aria-label="Map themes"><svg><use href="#eye"/></svg></button>
<button class="tool" aria-label="Filter legend"><svg><use href="#funnel"/></svg></button>
<button class="tool" aria-label="Filter by expression"><svg><use href="#expr"/></svg></button>
<button class="drop" aria-label="Expression options"></button>
<button class="tool" aria-label="Expand all"><svg><use href="#expand"/></svg></button>
<button class="tool" aria-label="Collapse all"><svg><use href="#collapse"/></svg></button>
<button class="tool" aria-label="Remove layer"><svg><use href="#rmlayer"/></svg></button>
</div>
<div class="tree flex-fill">
<div class="layer d-flex align-items-center"><input type="checkbox" id="l1"><span class="sym"><i style="background:#c98b3a"></i></span><label for="l1" class="fst-italic" style="color:#808080">solar_10_mw</label></div>
<div class="layer d-flex align-items-center"><input type="checkbox" id="l2" checked><span class="sym"><i style="background:#b5657c"></i></span><label for="l2">power_plants</label></div>
<div class="layer d-flex align-items-center" style="background:#dcdcdc"><input type="checkbox" id="l3" checked><span class="sym" style="background:#9eaab6"></span><label for="l3" class="text-decoration-underline text-black">georgia_county_population_shapefile</label></div>
</div>
</aside>

<section class="canvas flex-fill" aria-label="Map">
<svg viewBox="-849 -3 3948 2049" preserveAspectRatio="xMinYMin slice">
<path fill="#969696" d="M36,67L545,64 1105,64 1330,58 1315,96 1260,132 1221,165 1221,183 1208,200 1212,222 1275,260 1310,272 1335,298 1362,320 1392,331 1427,327 1453,332 1482,390 1505,430 1520,450 1536,500 1575,537 1599,565 1616,603 1642,610 1690,650 1740,671 1783,715 1796,740 1824,780 1855,788 1880,803 1893,815 1915,845 1946,857 1949,880 1943,920 1988,940 1988,960 2300,1700 2290,1926 2284,1954 2291,1976 2275,2016 2250,2055 292,2055 294,2001 304,1971 306,1926 300,1500 210,950z"/>
<g fill="#ff0" stroke="#f4f4e8" stroke-width="3" stroke-linejoin="round">
<path d="M484,537L652,538 678,592 668,600 630,642 630,664 622,672 568,710 547,679 493,679 493,625 485,604z"/>
<path d="M678,592L688,594 686,760 631,760 631,810 580,822 552,834 445,830 449,790 542,738 568,710 622,672 630,664 630,642 668,600z"/>
<path d="M652,538L686,485 732,481 735,522 808,545 818,551 775,578 733,585 726,599 688,594 678,592z"/>
<path d="M838,490L925,521 962,512 937,575 971,614 857,705 830,693 748,630 726,599 733,585 775,578 818,551 808,545z"/>
</g>
<g fill="none" stroke="#ececec" stroke-width="3" stroke-linejoin="round">
<path d="M158,68L125,122 115,145 115,185 94,215 94,230 72,250M211,66V132H244V175L274,178 318,150 358,67M274,178L262,202H322V254L313,270M76,271L155,273H313M447,66L443,122 412,172 418,210 380,226 395,247 388,256 322,254M395,247L420,260 498,254 525,272M545,66L547,132 544,168 527,198V272L533,345 529,365 533,395 527,535M547,133H652L690,150 768,258 738,281 692,278 690,285 675,292 642,292 625,284 530,292M690,285L702,333H735V520M800,66L776,83 813,115 821,160 788,240 770,262V297L818,335 878,358V391L890,403 907,430 878,473 838,484 808,545M788,241L850,244 900,193 942,202M903,66L914,96 970,107 983,165H1028L1037,160M983,165L960,172 942,200 934,255 950,313 905,333 878,358M950,313L980,310 1043,316 1067,296 1045,236 1064,196 1037,160 1049,150M1043,316L1068,352 1041,388 1066,426 962,512M735,403H890M530,363H565V377H648L660,383 735,379M529,363L360,377 295,367 313,272M345,377L337,400 325,532M292,273L255,350 178,383 148,427 110,428M131,535L215,524 325,526V535H486M388,537L361,602H323V628H148M328,628L330,676 322,724 200,757H176M330,676L400,690 490,686 493,678M400,690L398,798 446,800M198,875H345L382,870 430,830H446M345,878L368,950M552,833L548,886 595,928 605,950M631,812H638L669,853 668,912 650,950M668,912L790,922 823,948M815,942L838,937 850,920 885,902 907,868M685,912V890L716,870 720,812 742,790 724,762M686,760H724L738,770 775,762 808,776 855,707M775,762L803,802 845,815 848,828 897,846 915,880 940,904 951,945M845,828L866,808 905,757 912,712 880,690M912,712L1030,775 1035,785 1035,842 965,868 942,903M962,512L990,542 1095,560 1110,598 1052,626 990,631 971,614M1052,626L1124,672"/>
<path transform="translate(990 0)" d="M115,64L58,120V150H95L122,192 180,186 215,205M58,150L45,160M208,228L162,325 118,322 78,352M162,325L192,337 305,330 345,300M192,337V410L222,442 215,460 190,474 150,443 106,446 76,426M215,460L235,443 308,453 340,436 350,350 372,320M340,436L357,461 410,467 515,430M357,461L346,488 410,555 430,570 513,591 543,585 583,587 622,598M190,474L212,517 200,555 255,578 335,552 375,569 410,555M265,576L255,600 272,628 239,676 252,702 248,714 188,733 218,785 258,820 253,846 282,900 318,915 392,854V795L425,752 402,737 425,717M120,594L160,574 200,556M120,598L135,613 182,619 255,654M252,702L335,733 402,737M513,591L464,619 406,688 462,773 495,756 565,785 528,832 495,826 468,852 475,866 407,865 392,853M475,866L490,877 520,950M565,785L655,753 668,764 696,760 757,733 805,740M583,587L603,650 620,648 610,667 665,763M580,783L632,912 718,933 740,935 765,912 903,815M696,760L692,812 765,912M740,935L770,950M718,933L695,950M562,950L627,927 690,950M798,950L828,943 836,950M188,733L148,678 135,672 45,785M45,825L122,870 255,846M122,870L119,950M318,915L322,937 290,950"/>
<path transform="translate(270 1926)" d="M270,0L271,40 266,76M121,130V76H320V130M508,8L493,27 423,51 388,106 345,130M599,0V130M599,37L725,38 747,45 779,38V0M779,38L880,40 918,8M893,28L944,82 947,130M853,40V104L843,130"/>
<path transform="translate(1260 1926)" d="M67,8L111,67 106,115H302L285,66 321,68V0M215,8L224,22H321M435,8L449,60 485,92 500,94 547,104 590,70 649,60 624,0M626,16L688,30 752,21 788,38 806,8M788,38L760,130M882,8L918,35 1029,56M500,94L550,130M106,115L104,130M302,115L306,130M143,115V130"/>
</g>
<g id="plants" fill="#e8698a" stroke="#2d2a2c" stroke-width="3.500"></g>
</svg>
</section>
</main>

<section class="attr" aria-label="Attribute table">
<div class="attr-title text-center">
<div class="lights d-flex"><button aria-label="Close" style="background:#fc5753"></button><button aria-label="Minimize" style="background:#fdbc2e"></button><button aria-label="Zoom" style="background:#27c33a"></button></div>
<h1>georgia_county_population_shapefile — Features Total: 159, Filtered: 159, Selected: 3</h1>
</div>
<div class="attr-tools small-tools d-flex align-items-center" role="toolbar" aria-label="Table tools">
<button class="tool" aria-label="Toggle editing"><svg><use href="#pencil"/></svg></button>
<button class="tool" disabled aria-label="Multi edit"><svg><use href="#multiedit"/></svg></button>
<button class="tool" disabled aria-label="Save edits"><svg><use href="#saveedit"/></svg></button>
<button class="tool" aria-label="Reload"><svg><use href="#refresh"/></svg></button>
<span class="rule"></span>
<button class="tool corner" disabled aria-label="Add feature"><svg><use href="#addrow"/></svg></button>
<button class="tool" disabled aria-label="Delete features"><svg><use href="#trash"/></svg></button>
<button class="tool" disabled aria-label="Cut rows"><svg><use href="#cut"/></svg></button>
<button class="tool" aria-label="Copy rows"><svg><use href="#copy"/></svg></button>
<button class="tool" disabled aria-label="Paste rows"><svg><use href="#paste"/></svg></button>
<span class="rule"></span>
<button class="tool" aria-label="Select by expression"><svg><use href="#selexpr"/></svg></button>
<button class="tool" aria-label="Select all"><svg><use href="#selall"/></svg></button>
<button class="tool" aria-label="Invert selection"><svg><use href="#invert"/></svg></button>
<button class="tool" aria-label="Deselect all"><svg><use href="#desel1"/></svg></button>
<button class="tool" aria-label="Filter"><svg><use href="#funnel"/></svg></button>
<button class="tool" aria-label="Selection to top"><svg><use href="#totop"/></svg></button>
<button class="tool" aria-label="Pan to rows"><svg><use href="#pansel"/></svg></button>
<button class="tool" aria-label="Zoom to rows"><svg><use href="#zsel"/></svg></button>
<span class="rule"></span>
<button class="tool" disabled aria-label="New field"><svg><use href="#addcol"/></svg></button>
<button class="tool" disabled aria-label="Delete field"><svg><use href="#addcol"/></svg></button>
<button class="tool" aria-label="Organize columns"><svg><use href="#editcol"/></svg></button>
<button class="tool" aria-label="Field calculator"><svg><use href="#abacus"/></svg></button>
<span class="rule"></span>
<button class="tool" aria-label="Conditional formatting"><svg><use href="#condfmt"/></svg></button>
<span class="rule"></span>
<button class="tool" aria-label="Dock table"><svg><use href="#dock"/></svg></button>
<button class="tool" aria-label="Actions"><svg><use href="#actions"/></svg></button>
</div>
<div class="gridbox">
<div class="d-flex">
<div class="gridview flex-fill" style="min-width:0">
<table class="attr-table">
<thead><tr><th></th><th>STATEFP</th><th>COUNTYFP</th><th>COUNTYNS</th><th>AFFGEOID</th><th>GEOID</th><th>NAME</th><th>NAMELSAD</th><th>STUSPS</th><th>STATE_NAME</th><th>LSAD</th><th>ALAND</th><th>AWATER</th><th>county_pop</th></tr></thead>
<tbody id="rows"></tbody>
</table>
</div>
<div class="sbar vbar d-flex flex-column">
<button aria-label="Scroll up"><svg width="8" height="5"><path d="M0 5l4-5 4 5z" fill="#555"/></svg></button>
<div class="vthumb"></div>
<div class="flex-fill"></div>
<button aria-label="Scroll down"><svg width="8" height="5"><path d="M0 0l4 5 4-5z" fill="#555"/></svg></button>
</div>
</div>
<div class="sbar hbar d-flex">
<button aria-label="Scroll left"><svg width="5" height="8"><path d="M5 0L0 4l5 4z" fill="#444"/></svg></button>
<div class="flex-fill"><div class="hthumb"></div></div>
<button aria-label="Scroll right"><svg width="5" height="8"><path d="M0 0l5 4-5 4z" fill="#444"/></svg></button>
<span class="vbar bg-light"></span>
</div>
</div>
<div class="attr-foot d-flex align-items-center justify-content-between">
<button class="filter-btn corner d-flex align-items-center gap-1"><svg><use href="#funnel"/></svg>Show All Features</button>
<div class="foot-tools d-flex align-items-center">
<button class="tool" aria-label="Form view"><svg><use href="#form"/></svg></button>
<button class="tool on" aria-label="Table view"><svg><use href="#table"/></svg></button>
</div>
</div>
</section>

<script src="https://cdn.jsdelivr.net/npm/bootstrap@5.3.0/dist/js/bootstrap.bundle.min.js"></script>
<script>
const counties = [
  ['121','01694833','13121','Fulton','Fulton County','1364133162','19666288'],
  ['135','01688166','13135','Gwinnett','Gwinnett Cou...','1115653877','15611813'],
  ['067','01686112','13067','Cobb','Cobb County','880026860','12347127'],
  ['089','01687424','13089','DeKalb','DeKalb County','693443933','8858826'],
  ['063','01672399','13063','Clayton','Clayton County','366879097','6962586'],
  ['051','01694477','13051','Chatham','Chatham Cou...','1121772804','509852786'],
  ['057','01685718','13057','Cherokee','Cherokee Co...','1090597331','34427734']
];
const body = document.getElementById('rows');
counties.forEach((c, i) => {
  const cells = ['13', c[0], c[1], '0500000US1...', c[2], c[3], c[4], 'GA', 'Georgia', '06', c[5], c[6], '50'];
  const tr = body.insertRow();
  if (i < 3) tr.className = 'picked';
  tr.innerHTML = `<th scope="row">${i + 1}</th>` + cells.map((t, k) =>
    `<td class="${k > 9 ? 'text-end' : ''}${i === 2 && k === 0 ? ' current' : ''}">${t}</td>`).join('');
});
body.insertRow().innerHTML = '<th></th>' + '<td></td>'.repeat(13);

// power plant positions, in map units
const plants = [
  [822,78],[723,117],[447,177],[393,210],[384,204],[519,258],[192,393],[180,447],[390,513],[489,492],[204,567],[234,555],[204,603],
  [729,531],[741,534],[828,492],[852,510],[579,588],[669,594],[630,642],[621,669],[666,675],[666,694],[668,705],[669,696],[660,705],[663,756],[693,750],
  [723,684],[729,690],[792,732],[873,738],[990,597],[1026,666],[1026,675],[1026,657],[1056,660],[1026,714],[1038,744],[402,858],[333,882],[327,885],[330,885],[348,915],[354,912],[951,930],
  [1191,81],[1107,165],[1128,186],[1176,186],[1194,198],[1206,207],[1209,222],[1338,348],[1218,381],[1482,393],[1482,402],[1314,528],[1287,555],[1182,555],[1128,582],[1182,597],[1251,615],[1599,564],[1125,672],[1341,768],
  [1752,801],[1881,804],[1911,843],[1917,849],[1914,846],[1806,873],[1836,897],[1878,921],[1896,909],[1932,927],[1308,915],[1185,935],[1185,932],
  [828,1935],[750,1995],[972,1980],[801,2040],[792,2034],[300,2048],[1740,2034],[2145,2025],[2202,2007],[2157,2045],[2177,2049]
];
document.getElementById('plants').innerHTML = plants.map(([x, y]) => `<circle cx="${x}" cy="${y}" r="8.500"/>`).join('');
</script>
</body>
</html>
